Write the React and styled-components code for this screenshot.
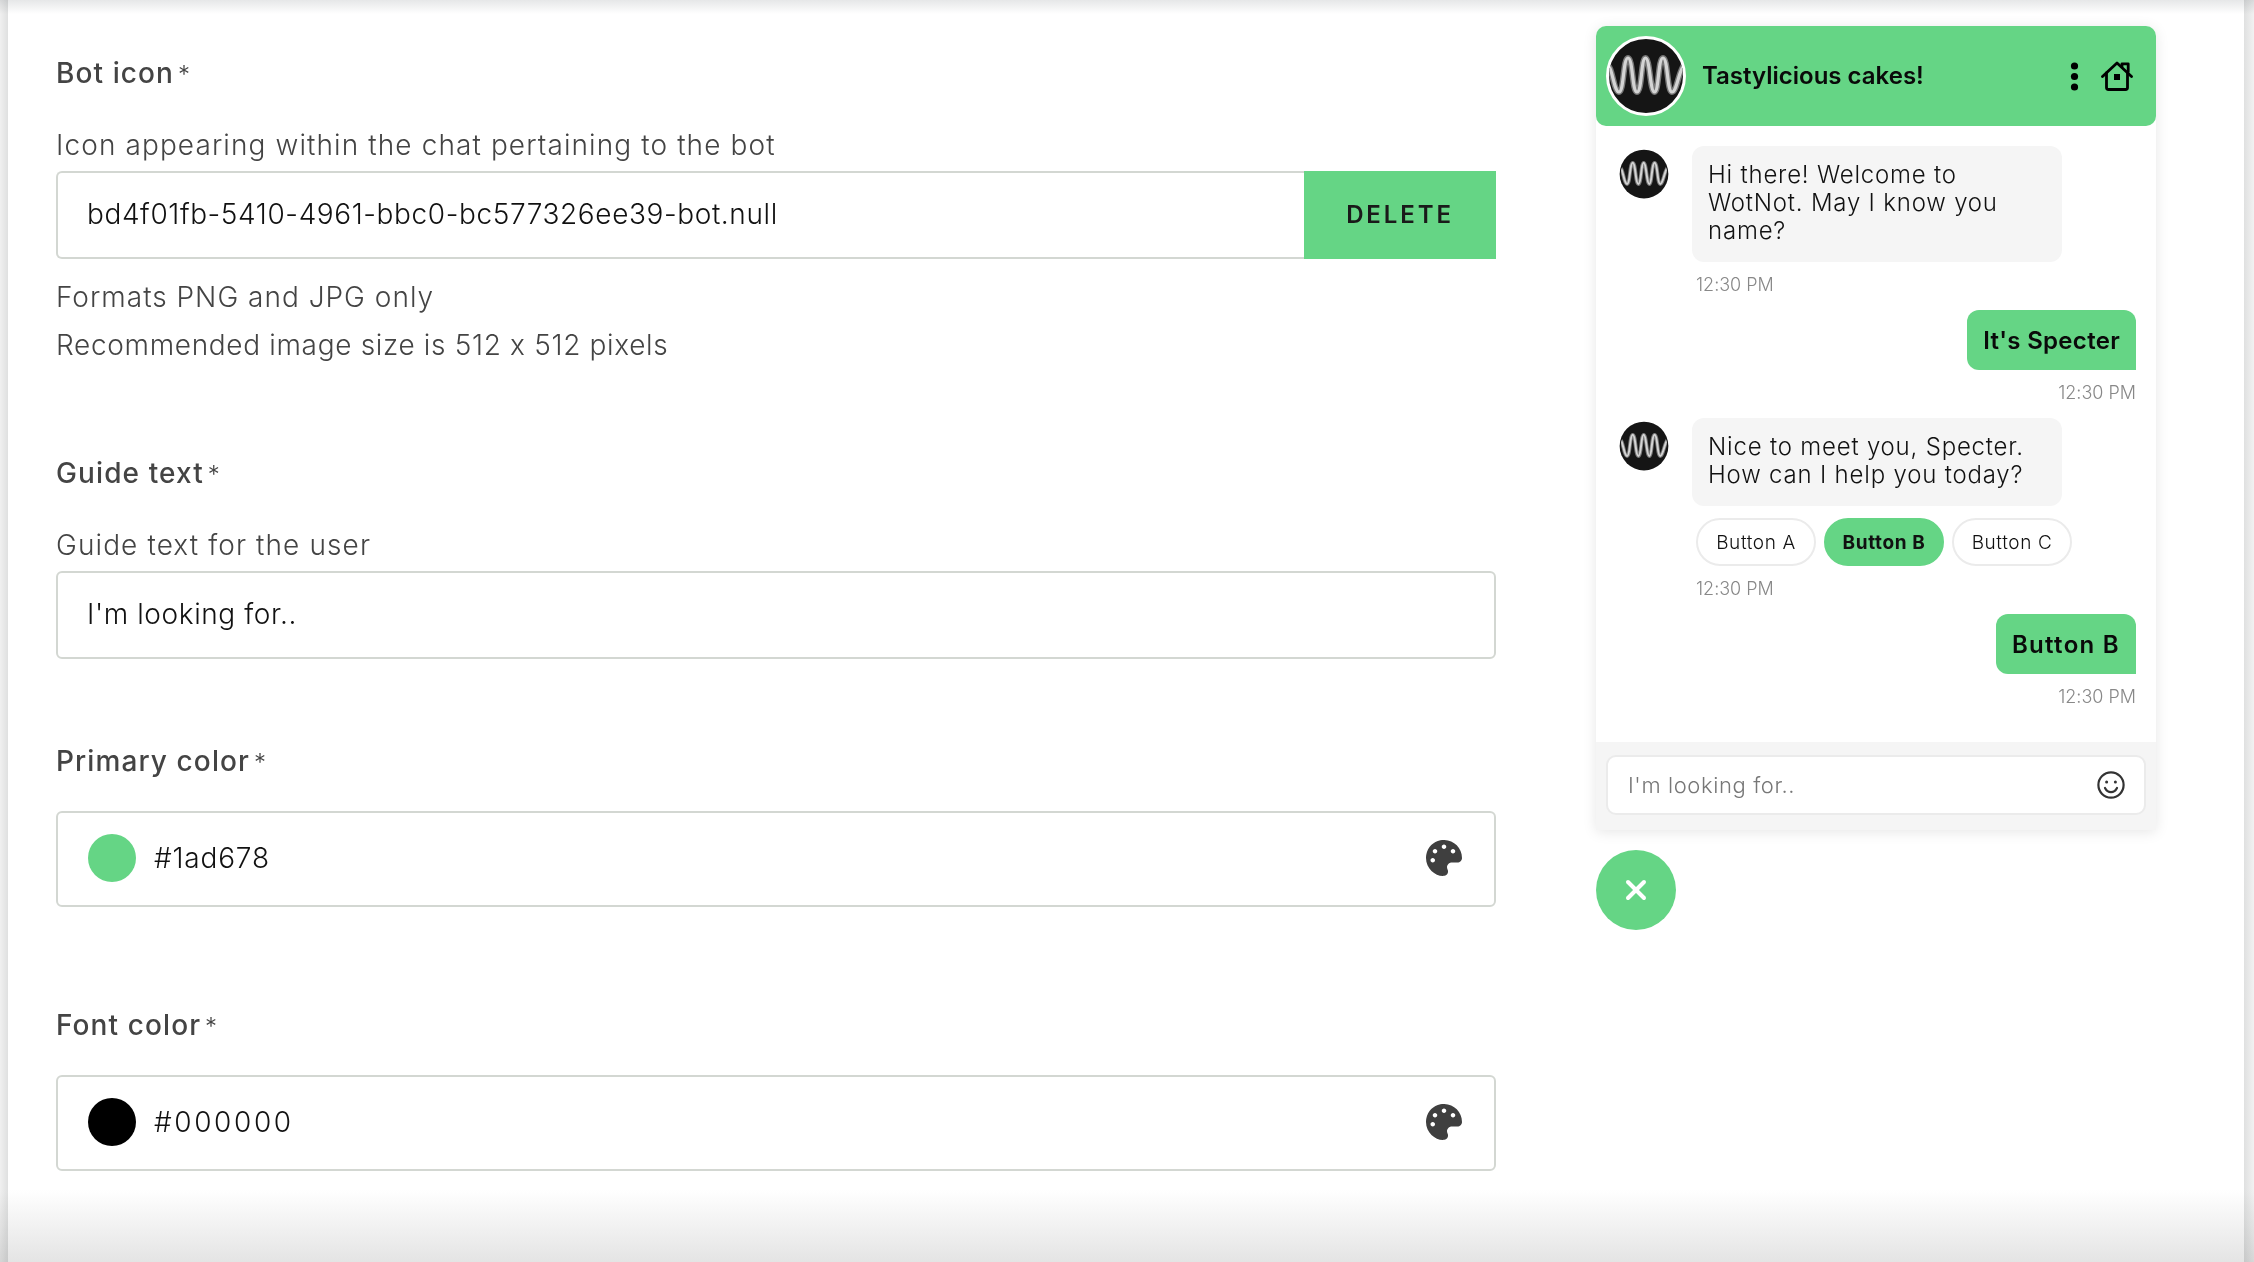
import styled, { createGlobalStyle } from "styled-components";
import { FaPalette } from "react-icons/fa";
import { X } from "lucide-react";

const green = "#65d585";
const font = `Inter, "Noto Sans", sans-serif`;

const GlobalStyle = createGlobalStyle`
  html, body {
    margin: 0;
    padding: 0;
    background: #fff;
  }
  * {
    box-sizing: border-box;
  }
`;

const Page = styled.div`
  position: relative;
  display: flex;
  width: 2254px;
  height: 1262px;
  overflow: hidden;
  background: #fff;
  font-family: ${font};
  font-feature-settings: "calt" 0;
  &::before {
    content: "";
    position: absolute;
    inset: 0;
    pointer-events: none;
    background:
      linear-gradient(to bottom, #e6e7e8, #ffffff 14px),
      linear-gradient(to top, #e4e4e4, #ffffff 72px);
    background-blend-mode: multiply;
    mix-blend-mode: multiply;
  }
`;

const EdgeLeft = styled.div`
  width: 8px;
  flex: none;
  background: linear-gradient(to right, #f0f0f0, #dfe0e0);
`;

const EdgeRight = styled.div`
  width: 10px;
  flex: none;
  margin-left: auto;
  background: linear-gradient(to right, #dfe0e0, #f2f2f2);
`;

const FormColumn = styled.div`
  width: 1488px;
  flex: none;
  padding: 57px 0 0 48px;
`;

const Field = styled.section`
  margin-top: ${(p) => p.$gap || 0}px;
`;

const Label = styled.div`
  font-size: 28px;
  line-height: 32px;
  font-weight: 500;
  letter-spacing: 1.1px;
  color: #444;
  sup {
    font-size: 24px;
    font-weight: 300;
    line-height: 0;
    margin-left: 4px;
    vertical-align: 0;
  }
`;

const Helper = styled.div`
  margin-top: 40px;
  font-size: 28px;
  line-height: 32px;
  font-weight: 300;
  letter-spacing: 1.1px;
  color: #444;
`;

const InputRow = styled.div`
  display: flex;
  height: ${(p) => p.$height || 88}px;
  margin-top: ${(p) => p.$top || 10}px;
`;

const InputBox = styled.div`
  flex: 1;
  display: flex;
  align-items: center;
  padding: 0 30px 2px 29px;
  border: 2px solid #d3d7d2;
  border-radius: ${(p) => (p.$attached ? "6px 0 0 6px" : "6px")};
  border-right-width: ${(p) => (p.$attached ? 0 : 2)}px;
  font-size: 28px;
  font-weight: 300;
  letter-spacing: 0.6px;
  color: #111;
`;

const DeleteButton = styled.button`
  width: 192px;
  padding: 0 0 2px;
  border: none;
  background: ${green};
  color: #1a1a1a;
  font-family: ${font};
  font-size: 24px;
  font-weight: 600;
  letter-spacing: 2.9px;
`;

const Note = styled.div`
  margin-top: ${(p) => p.$top}px;
  font-size: 28px;
  line-height: 32px;
  font-weight: 300;
  letter-spacing: ${(p) => p.$spacing}px;
  color: #444;
`;

const Swatch = styled.span`
  width: 48px;
  height: 48px;
  flex: none;
  border-radius: 50%;
  background: ${(p) => p.$color};
  margin: 0 18px 0 1px;
`;

const ColorValue = styled.span`
  flex: 1;
  letter-spacing: ${(p) => p.$spacing}px;
`;

const PaletteIcon = styled(FaPalette)`
  width: 36px;
  height: 36px;
  color: #3f3f3f;
  margin-right: 2px;
`;

const ChatColumn = styled.div`
  margin-left: 100px;
  padding-top: 26px;
  width: 560px;
  flex: none;
`;

const ChatWindow = styled.div`
  display: flex;
  flex-direction: column;
  height: 804px;
  border-radius: 10px 10px 0 0;
  background: #fff;
  box-shadow: 0 2px 14px rgba(0, 0, 0, 0.1);
`;

const ChatHeader = styled.header`
  display: flex;
  align-items: center;
  height: 100px;
  flex: none;
  padding: 0 23px 0 10px;
  border-radius: 10px;
  background: ${green};
`;

const HeaderTitle = styled.div`
  flex: 1;
  margin: 0 0 2px 16px;
  font-size: 24px;
  font-weight: 600;
  color: #0a0a0a;
`;

const MenuDots = styled.svg`
  width: 9px;
  height: 29px;
  margin-right: 22px;
`;

const HomeIcon = styled.svg`
  width: 32px;
  height: 30px;
`;

const LogoSvg = styled.svg`
  display: block;
  flex: none;
  width: ${(p) => p.$size}px;
  height: ${(p) => p.$size}px;
  margin-top: ${(p) => p.$top || 0}px;
`;

const Messages = styled.div`
  flex: 1;
  display: flex;
  flex-direction: column;
  padding: 20px 20px 0 23px;
`;

const BotRow = styled.div`
  display: flex;
  gap: 23px;
  margin-bottom: ${(p) => p.$bottom}px;
`;

const BotBody = styled.div`
  width: 380px;
`;

const BotBubble = styled.div`
  width: 370px;
  padding: 15px 16px 17px;
  border-radius: 12px;
  background: #f5f5f5;
  font-size: 24px;
  line-height: 28px;
  font-weight: 300;
  letter-spacing: 0.8px;
  color: #111;
`;

const QuickReplies = styled.div`
  display: flex;
  gap: 8px;
  margin: 12px 0 0 4px;
`;

const QuickReply = styled.div`
  display: flex;
  align-items: center;
  justify-content: center;
  width: 120px;
  height: 48px;
  border: 2px solid ${(p) => (p.$active ? green : "#ebebeb")};
  border-radius: 24px;
  background: ${(p) => (p.$active ? green : "#fff")};
  font-size: 19px;
  font-weight: ${(p) => (p.$active ? 700 : 300)};
  letter-spacing: 0.6px;
  color: #111;
`;

const Time = styled.div`
  margin: 11px 0 0 ${(p) => (p.$right ? 0 : 4)}px;
  font-size: 18px;
  line-height: 24px;
  font-weight: 300;
  color: #888;
  text-align: ${(p) => (p.$right ? "right" : "left")};
`;

const UserBlock = styled.div`
  display: flex;
  flex-direction: column;
  align-items: flex-end;
  margin-bottom: ${(p) => p.$bottom}px;
`;

const UserBubble = styled.div`
  display: flex;
  align-items: center;
  height: 60px;
  padding: 0 16px;
  border-radius: 12px 12px 0 12px;
  background: ${green};
  font-size: 24px;
  font-weight: 600;
  letter-spacing: ${(p) => p.$spacing}px;
  color: #0a0a0a;
`;

const ChatFooter = styled.div`
  height: 88px;
  flex: none;
  padding: 13px 10px 0 10px;
  background: #f5f5f5;
`;

const ChatInput = styled.div`
  display: flex;
  align-items: center;
  justify-content: space-between;
  height: 60px;
  padding: 0 19px 0 20px;
  border: 2px solid #ebebeb;
  border-radius: 10px;
  background: #fff;
  font-size: 22px;
  font-weight: 300;
  letter-spacing: 0.6px;
  color: #777;
`;

const CloseButton = styled.button`
  display: flex;
  align-items: center;
  justify-content: center;
  width: 80px;
  height: 80px;
  margin-top: 20px;
  padding: 0;
  border: none;
  border-radius: 50%;
  background: ${green};
  color: #fff;
`;

const WAVE =
  "M2 30C6 30 8 56 13 56C18 56 17 22 22 22C27 22 26 56 31 56C36 56 35 22 39.5 22C44 22 44 56 48.5 56C53 56 52 22 57 22C62 22 61 56 66 56C71 56 73 32 79 28";

const Logo = ({ size, top, ring }) => (
  <LogoSvg viewBox="0 0 80 80" $size={size} $top={top}>
    <defs>
      <clipPath id={`logo-${size}`}>
        <circle cx="40" cy="40" r="37" />
      </clipPath>
    </defs>
    <circle cx="40" cy="40" r={ring ? 38.5 : 39} fill="#151515" stroke={ring ? "#fff" : "none"} strokeWidth={ring ? 3 : 0} />
    <g clipPath={`url(#logo-${size})`} fill="none">
      <path d={WAVE} stroke="#777" strokeWidth="6" />
      <path d={WAVE} stroke="#d4d4d4" strokeWidth="3.2" />
    </g>
  </LogoSvg>
);

const Smiley = () => (
  <svg width="28" height="28" viewBox="0 0 28 28" fill="none" stroke="#333" strokeWidth="2.2" strokeLinecap="round">
    <circle cx="14" cy="14" r="12.6" />
    <circle cx="9.6" cy="11" r="1.5" fill="#333" stroke="none" />
    <circle cx="18.4" cy="11" r="1.5" fill="#333" stroke="none" />
    <path d="M8 17c1.5 3 3.6 4.2 6 4.2s4.5-1.2 6-4.2" />
  </svg>
);

const App = () => {
  return (
    <Page>
      <GlobalStyle />
      <EdgeLeft />
      <FormColumn>
        <Field>
          <Label>
            Bot icon<sup>*</sup>
          </Label>
          <Helper>Icon appearing within the chat pertaining to the bot</Helper>
          <InputRow>
            <InputBox $attached>bd4f01fb-5410-4961-bbc0-bc577326ee39-bot.null</InputBox>
            <DeleteButton>DELETE</DeleteButton>
          </InputRow>
          <Note $top={22} $spacing={1}>Formats PNG and JPG only</Note>
          <Note $top={16} $spacing={0.67}>Recommended image size is 512 x 512 pixels</Note>
        </Field>

        <Field $gap={96}>
          <Label>
            Guide text<sup>*</sup>
          </Label>
          <Helper>Guide text for the user</Helper>
          <InputRow>
            <InputBox>I'm looking for..</InputBox>
          </InputRow>
        </Field>

        <Field $gap={86}>
          <Label>
            Primary color<sup>*</sup>
          </Label>
          <InputRow $height={96} $top={34}>
            <InputBox>
              <Swatch $color={green} />
              <ColorValue $spacing={0.8}>#1ad678</ColorValue>
              <PaletteIcon />
            </InputBox>
          </InputRow>
        </Field>

        <Field $gap={102}>
          <Label>
            Font color<sup>*</sup>
          </Label>
          <InputRow $height={96} $top={34}>
            <InputBox>
              <Swatch $color="#000" />
              <ColorValue $spacing={2.6}>#000000</ColorValue>
              <PaletteIcon />
            </InputBox>
          </InputRow>
        </Field>
      </FormColumn>

      <ChatColumn>
        <ChatWindow>
          <ChatHeader>
            <Logo size={80} ring />
            <HeaderTitle>Tastylicious cakes!</HeaderTitle>
            <MenuDots viewBox="0 0 9 29">
              <circle cx="4.5" cy="4" r="3.6" fill="#000" />
              <circle cx="4.5" cy="14.5" r="3.6" fill="#000" />
              <circle cx="4.5" cy="25" r="3.6" fill="#000" />
            </MenuDots>
            <HomeIcon viewBox="0 0 32 30" fill="none" stroke="#000" strokeWidth="2.8" strokeLinejoin="round" strokeLinecap="round">
              <path d="M1.5 15.5 16 2l14.5 13.5" />
              <path d="M21 5.5V2.8h6.2v8" />
              <path d="M5.5 12v14.5a2 2 0 0 0 2 2h17a2 2 0 0 0 2-2V12" />
              <rect x="13" y="13" width="6" height="6" fill="#000" stroke="none" />
            </HomeIcon>
          </ChatHeader>

          <Messages>
            <BotRow $bottom={13}>
              <Logo size={50} top={3} />
              <BotBody>
                <BotBubble>Hi there! Welcome to WotNot. May I know you name?</BotBubble>
                <Time>12:30 PM</Time>
              </BotBody>
            </BotRow>
            <UserBlock $bottom={13}>
              <UserBubble $spacing={0.3}>It's Specter</UserBubble>
              <Time $right>12:30 PM</Time>
            </UserBlock>
            <BotRow $bottom={13}>
              <Logo size={50} top={3} />
              <BotBody>
                <BotBubble>Nice to meet you, Specter. How can I help you today?</BotBubble>
                <QuickReplies>
                  <QuickReply>Button A</QuickReply>
                  <QuickReply $active>Button B</QuickReply>
                  <QuickReply>Button C</QuickReply>
                </QuickReplies>
                <Time>12:30 PM</Time>
              </BotBody>
            </BotRow>
            <UserBlock>
              <UserBubble $spacing={1.3}>Button B</UserBubble>
              <Time $right>12:30 PM</Time>
            </UserBlock>
          </Messages>

          <ChatFooter>
            <ChatInput>
              I'm looking for..
              <Smiley />
            </ChatInput>
          </ChatFooter>
        </ChatWindow>
        <CloseButton>
          <X size={32} strokeWidth={3} />
        </CloseButton>
      </ChatColumn>
      <EdgeRight />
    </Page>
  );
};

export default App;
